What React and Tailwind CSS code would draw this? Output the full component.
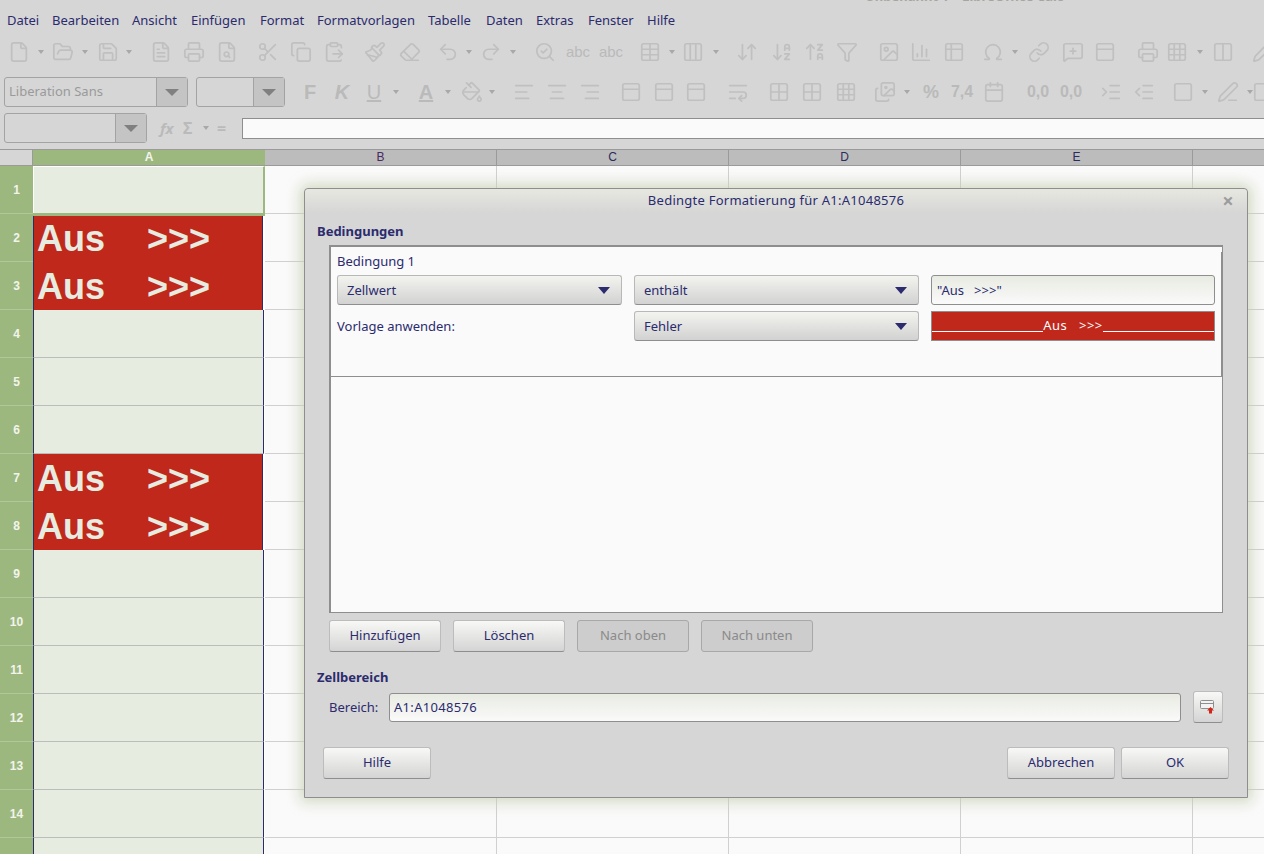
import React from "react";
import {
  File, FolderOpen, Save, FileText, Printer, FileSearch, Scissors, Copy, ClipboardPaste, Paintbrush, Eraser,
  Undo2, Redo2, SearchCheck, Table, Columns3, ArrowDownUp, ArrowDownAZ, ArrowUpZA, Filter, Image, ChartColumn,
  Table2, Omega, Link, MessageSquarePlus, PanelTop, Grid3x3, Columns2, Pencil, PaintBucket, AlignLeft,
  AlignCenter, AlignRight, WrapText, Grid2x2, Images, Calendar, IndentIncrease, IndentDecrease, Square, PenLine,
} from "lucide-react";

const uiFont = "font-['Noto_Sans',sans-serif]";
const navy = "text-[#2b2b6e]";

const menu = [
  ["Datei", "w-[45px]"], ["Bearbeiten", "w-[80px]"], ["Ansicht", "w-[59px]"], ["Einfügen", "w-[69px]"],
  ["Format", "w-[57px]"], ["Formatvorlagen", "w-[111px]"], ["Tabelle", "w-[58px]"], ["Daten", "w-[50px]"],
  ["Extras", "w-[52px]"], ["Fenster", "w-[59px]"], ["Hilfe", "w-[40px]"],
];

// null icon = the little dropdown arrow
const row1 = [
  [File, "ml-[10px]"], [null, "ml-[10px]"], [FolderOpen, "ml-[10px]"], [null, "ml-[10px]"], [Save, "ml-[11px]"], [null, "ml-[9px]"],
  [FileText, "ml-[20px]"], [Printer, "ml-[15px]"], [FileSearch, "ml-[15px]"], [Scissors, "ml-[23px]"], [Copy, "ml-[15px]"],
  [ClipboardPaste, "ml-[15px]"], [Paintbrush, "ml-[23px]"], [Eraser, "ml-[17px]"], [Undo2, "ml-[20px]"], [null, "ml-[9px]"],
  [Redo2, "ml-[10px]"], [null, "ml-[10px]"], [SearchCheck, "ml-[20px]"], ["abc", "ml-[15px]"], ["abc", "ml-[15px]"],
  [Table, "ml-[21px]"], [null, "ml-[10px]"], [Columns3, "ml-[9px]"], [null, "ml-[11px]"], [ArrowDownUp, "ml-[19px]"],
  [ArrowDownAZ, "ml-[17px]"], [ArrowUpZA, "ml-[15px]"], [Filter, "ml-[14px]"], [Image, "ml-[24px]"], [ChartColumn, "ml-[14px]"],
  [Table2, "ml-[15px]"], [Omega, "ml-[21px]"], [null, "ml-[10px]"], [Link, "ml-[12px]"], [MessageSquarePlus, "ml-[16px]"],
  [PanelTop, "ml-[14px]"], [Printer, "ml-[25px]"], [Grid3x3, "ml-[11px]"], [null, "ml-[11px]"], [Columns2, "ml-[11px]"], [Pencil, "ml-[22px]"],
];

const row2 = [
  ["F", "ml-[16px] font-bold text-[20px]"], ["K", "ml-[14px] font-bold italic text-[20px]"], ["U", "ml-[14px] underline text-[20px]"], [null, "ml-[10px]"],
  ["A", "ml-[18px] font-bold underline text-[20px]"], [null, "ml-[10px]"], [PaintBucket, "ml-[12px]"], [null, "ml-[8px]"],
  [AlignLeft, "ml-[20px]"], [AlignCenter, "ml-[15px]"], [AlignRight, "ml-[15px]"], [PanelTop, "ml-[23px]"], [PanelTop, "ml-[15px]"],
  [PanelTop, "ml-[14px]"], [WrapText, "ml-[24px]"], [Grid2x2, "ml-[23px]"], [Grid2x2, "ml-[15px]"], [Grid3x3, "ml-[16px]"],
  [Images, "ml-[21px]"], [null, "ml-[10px]"], ["%", "ml-[12px] font-bold text-[18px]"], ["7,4", "ml-[13px] font-bold text-[16px]"], [Calendar, "ml-[14px]"],
  ["0,0", "ml-[26px] font-bold text-[16px]"], ["0,0", "ml-[15px] font-bold text-[16px]"], [IndentIncrease, "ml-[22px]"], [IndentDecrease, "ml-[15px]"],
  [Square, "ml-[21px]"], [null, "ml-[10px]"], [PenLine, "ml-[11px]"], [null, "ml-[10px]"], [Square, "ml-[1px]"],
];

const rows = [1, 2, 3, 4, 5, 6, 7, 8, 9, 10, 11, 12, 13, 14, 15];
const redRows = [2, 3, 7, 8];

function Caret() {
  return <span className="w-[6px] shrink-0 border-x-[3px] border-t-[4px] border-x-transparent border-t-[#a8a8a8]" />;
}

function ToolItem({ item, cls }) {
  if (item === null) return <span className={`${cls} shrink-0 flex`}><Caret /></span>;
  if (typeof item === "string") {
    return (
      <span className={`text-[15px] ${cls} w-[18px] shrink-0 flex justify-center whitespace-nowrap text-[#bababa] font-['Liberation_Sans',sans-serif]`}>
        {item}
      </span>
    );
  }
  const Icon = item;
  return (
    <span className={`${cls} w-[18px] shrink-0 flex justify-center`}>
      <Icon size={22} strokeWidth={1.9} className="shrink-0 text-[#c0c0c0]" />
    </span>
  );
}

function Combo({ width, btn, label }) {
  return (
    <div className={`${width} h-[30px] flex rounded-[3px] border border-[#a3a3a3] bg-[#d6d6d6]`}>
      <span className="flex-1 pl-[4px] leading-[27px] text-[13px] text-[#9a9a9a]">{label}</span>
      <span className={`${btn} flex items-center justify-center border-l border-[#a3a3a3] bg-[#c4c4c4]`}>
        <span className="border-x-[7px] border-t-[7px] border-x-transparent border-t-[#808080]" />
      </span>
    </div>
  );
}

function Select({ label, width }) {
  return (
    <div className={`${width} h-[30px] flex items-center justify-between pl-[9px] pr-[11px] pt-[1px] rounded-[3px] border border-[#b8b8b8] border-b-[#8e8e8e] bg-gradient-to-b from-[#f3f3ef] to-[#d2d2d2] text-[13px] ${navy}`}>
      <span>{label}</span>
      <span className="border-x-[6px] border-t-[7px] border-x-transparent border-t-[#2b2b6e]" />
    </div>
  );
}

function Btn({ label, width, disabled, cls = "" }) {
  return (
    <div className={`${width} ${cls} h-[32px] flex items-center justify-center rounded-[3px] border text-[13px] ${
      disabled
        ? "border-[#a8a8a8] bg-[#cdcdcd] text-[#8a8a8a]"
        : `border-[#bcbcbc] border-b-[#8e8e8e] bg-gradient-to-b from-[#f8f8f6] to-[#d4d4d4] ${navy}`
    }`}>
      {label}
    </div>
  );
}

function SheetRow({ n }) {
  const red = redRows.includes(n);
  return (
    <div className="flex h-[48px] shrink-0">
      <div className="w-[33px] shrink-0 flex items-center justify-center bg-[#9db87e] border-b border-[#b3c79c] text-[12px] font-bold text-[#f2f4ec] font-['Liberation_Sans',sans-serif]">
        {n < 15 && n}
      </div>
      {n === 1 ? (
        <div className="relative z-10 w-[232px] shrink-0 bg-[#e7ece1] border border-white border-r-2 border-r-[#9db87e]">
          {/* selection frame runs slightly into the next row */}
          <div className="absolute -left-[1px] -right-[2px] -bottom-[3px] h-[3px] bg-[#9db87e]" />
        </div>
      ) : red ? (
        <div className="w-[232px] shrink-0 flex items-end border-r-2 border-r-white">
          <div className="w-[231px] h-full bg-[#c0281c] border-l border-r border-[#2b2b6e] pl-[3px] whitespace-pre text-[36px] leading-[50px] font-bold text-[#e7ece1] font-['Liberation_Sans',sans-serif]">
            {"Aus    "}<span className="ml-[2px]">{">>>"}</span>
          </div>
        </div>
      ) : (
        <div className="w-[232px] shrink-0 border-r-2 border-r-white">
          <div className="w-[231px] h-full bg-[#e7ece1] border-l border-r border-l-[#2b2b6e] border-r-[#2b2b6e] border-b border-b-[#bcbcbc]" />
        </div>
      )}
      <div className="flex-1 flex bg-[#fafafa]">
        <div className="w-[232px] shrink-0 border-r border-b border-[#d0d0d0]" />
        <div className="w-[232px] shrink-0 border-r border-b border-[#d0d0d0]" />
        <div className="w-[232px] shrink-0 border-r border-b border-[#d0d0d0]" />
        <div className="w-[232px] shrink-0 border-r border-b border-[#d0d0d0]" />
        <div className="flex-1 border-b border-[#d0d0d0]" />
      </div>
    </div>
  );
}

export default function App() {
  return (
    <div className={`relative w-[1264px] h-[854px] overflow-hidden bg-[#d6d6d6] ${uiFont}`}>
      {/* window title, only its lower edge is on screen */}
      <div className="h-[10px] overflow-hidden pl-[865px]">
        <div className="-mt-[13px] text-[13px] leading-[18px] font-bold text-[#a6a6a0] whitespace-nowrap">
          Unbenannt 1 – LibreOffice Calc
        </div>
      </div>

      <div className={`h-[20px] pt-[2px] flex items-center pl-[7px] text-[13px] ${navy}`}>
        {menu.map(([name, w]) => (
          <span key={name} className={`${w} shrink-0`}>{name}</span>
        ))}
      </div>

      <div className="mt-[8px] h-[28px] flex items-center overflow-hidden">
        {row1.map(([item, cls], i) => <ToolItem key={i} item={item} cls={cls} />)}
      </div>

      <div className="mt-[11px] h-[30px] flex items-center overflow-hidden pl-[4px]">
        <Combo width="w-[184px] shrink-0" btn="w-[31px]" label="Liberation Sans" />
        <div className="w-[8px] shrink-0" />
        <Combo width="w-[89px] shrink-0" btn="w-[31px]" label="" />
        {row2.map(([item, cls], i) => <ToolItem key={i} item={item} cls={cls} />)}
      </div>

      <div className="mt-[6px] h-[30px] flex items-center pl-[4px]">
        <Combo width="w-[143px] shrink-0" btn="w-[31px]" label="" />
        <span className="ml-[13px] w-[18px] text-[15px] italic font-bold text-[#bababa]">fx</span>
        <span className="ml-[5px] w-[18px] text-[16px] font-bold text-[#bababa]">Σ</span>
        <span className="ml-[2px] flex"><Caret /></span>
        <span className="ml-[8px] w-[14px] text-[16px] font-bold text-[#bababa]">=</span>
        <div className="ml-[11px] flex-1 h-[21px] bg-[#fafafa] border border-r-0 border-[#8e8e8e]" />
      </div>

      {/* column headers */}
      <div className="mt-[6px] h-[16px] flex border-t border-[#9a9a9a] text-[12px] leading-[15px] font-['Liberation_Sans',sans-serif]">
        <div className="w-[32px] shrink-0 bg-[#d6d6d6]" />
        <div className="w-[233px] shrink-0 text-center bg-[#9db87e] font-bold text-[#f2f4ec] border-l border-[#9a9a9a]">A</div>
        <div className="w-[232px] shrink-0 text-center bg-[#bcbcbc] border-r border-[#9a9a9a] text-[#4a2b5f]">B</div>
        <div className="w-[232px] shrink-0 text-center bg-[#bcbcbc] border-r border-[#9a9a9a] text-[#2b2b5f]">C</div>
        <div className="w-[232px] shrink-0 text-center bg-[#bcbcbc] border-r border-[#9a9a9a] text-[#2b2b5f]">D</div>
        <div className="w-[232px] shrink-0 text-center bg-[#bcbcbc] border-r border-[#9a9a9a] text-[#2b2b5f]">E</div>
        <div className="flex-1 bg-[#bcbcbc]" />
      </div>

      <div className="flex flex-col border-t border-[#9a9a9a]">
        {rows.map((n) => <SheetRow key={n} n={n} />)}
      </div>

      {/* dialog */}
      <div className="absolute z-20 left-[304px] top-[188px] w-[944px] h-[610px] flex flex-col rounded-t-[4px] border border-[#8e8e8e] bg-[#d6d6d6] shadow-[0_0_14px_4px_rgba(196,206,176,0.75)]">
        <div className="relative h-[24px] shrink-0 flex items-center justify-center rounded-t-[4px] bg-gradient-to-b from-[#e6e8e0] to-[#d6d6d6] text-[13px] tracking-[0.25px] text-[#2b2b6e]">
          Bedingte Formatierung für A1:A1048576
          <span className="absolute right-[13px] top-0 text-[20px] leading-[24px] font-bold text-[#9c9c9c]">×</span>
        </div>

        <div className="mt-[9px] pl-[12px] h-[18px] text-[13px] leading-[18px] font-bold text-[#2b2b6e]">Bedingungen</div>

        <div className="mt-[5px] ml-[24px] w-[894px] h-[368px] shrink-0 bg-[#fafafa] border border-[#8e8e8e] border-t-2 border-l-2">
          <div className="w-[891px] h-[125px] border-r border-b border-[#8e8e8e] pl-[6px]">
            <div className={`mt-[5px] h-[18px] text-[13px] leading-[18px] ${navy}`}>Bedingung 1</div>
            <div className="mt-[5px] flex gap-[12px]">
              <Select label="Zellwert" width="w-[285px]" />
              <Select label="enthält" width="w-[285px]" />
              <div className={`w-[284px] h-[30px] pl-[5px] pt-[1px] flex items-center whitespace-pre rounded-[3px] border border-[#8e8e8e] bg-gradient-to-b from-[#e8ebe2] to-[#fafafa] text-[13px] ${navy}`}>
                {"\"Aus   >>>\""}
              </div>
            </div>
            <div className="mt-[6px] flex gap-[12px]">
              <div className={`w-[285px] h-[30px] pt-[1px] flex items-center text-[13px] ${navy}`}>Vorlage anwenden:</div>
              <Select label="Fehler" width="w-[285px]" />
              <div className="w-[284px] h-[30px] flex items-end pb-[8px] bg-[#c0281c] border border-[#8e8e8e]">
                <span className="flex-1 h-[1px] bg-white" />
                <span className="whitespace-pre text-[13px] leading-[14px] tracking-[0.5px] text-white">{"Aus   >>>"}</span>
                <span className="flex-1 h-[1px] bg-white" />
              </div>
            </div>
          </div>
        </div>

        <div className="mt-[7px] ml-[24px] flex gap-[12px]">
          <Btn label="Hinzufügen" width="w-[112px]" />
          <Btn label="Löschen" width="w-[112px]" />
          <Btn label="Nach oben" width="w-[112px]" disabled />
          <Btn label="Nach unten" width="w-[112px]" disabled />
        </div>

        <div className="mt-[16px] pl-[12px] h-[18px] text-[13px] leading-[18px] font-bold text-[#2b2b6e]">Zellbereich</div>

        <div className="mt-[5px] ml-[24px] flex items-center">
          <span className={`w-[60px] pt-[1px] text-[13px] ${navy}`}>Bereich:</span>
          <div className={`w-[792px] h-[29px] pl-[4px] pt-[1px] flex items-center rounded-[3px] border border-[#8e8e8e] bg-gradient-to-b from-[#e8ebe2] to-[#fafafa] text-[13px] tracking-[0.3px] ${navy}`}>
            A1:A1048576
          </div>
          <div className="ml-[12px] w-[30px] h-[32px] flex items-center justify-center rounded-[3px] border border-[#bcbcbc] border-b-[#8e8e8e] bg-gradient-to-b from-[#f8f8f6] to-[#d4d4d4]">
            <svg width="16" height="16" viewBox="0 0 16 16">
              <rect x="0.5" y="1.5" width="13" height="8" rx="1" fill="#f2f2f2" stroke="#8e8e8e" />
              <path d="M1 4.5h12" stroke="#8e8e8e" />
              <path d="M10.5 8l3.5 3.5h-2v3h-3v-3h-2z" fill="#d2241a" />
            </svg>
          </div>
        </div>

        <div className="mt-[24px] px-[18px] flex">
          <Btn label="Hilfe" width="w-[108px]" />
          <div className="flex-1" />
          <Btn label="Abbrechen" width="w-[108px]" />
          <Btn label="OK" width="w-[108px]" cls="ml-[6px]" />
        </div>
      </div>
    </div>
  );
}
